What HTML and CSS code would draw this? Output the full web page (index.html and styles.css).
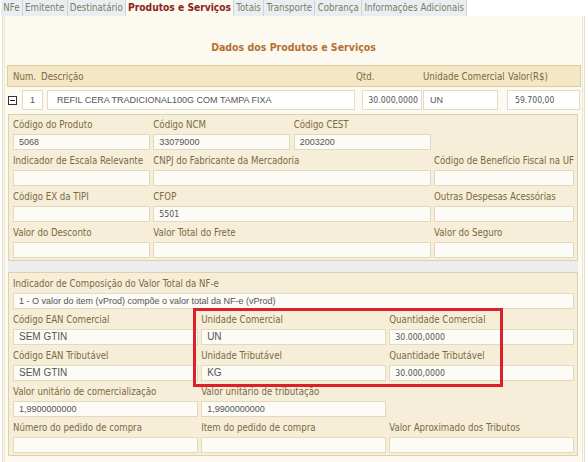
FILE: index.html
```html
<!DOCTYPE html>
<html lang="pt-BR">
<head>
<meta charset="utf-8">
<title>Dados dos Produtos e Serviços</title>
<link rel="stylesheet" href="styles.css">
</head>
<body>
<div class="tabs">
  <span class="tab">NFe</span>
  <span class="tab">Emitente</span>
  <span class="tab">Destinatário</span>
  <span class="tab active">Produtos e Serviços</span>
  <span class="tab">Totais</span>
  <span class="tab">Transporte</span>
  <span class="tab">Cobrança</span>
  <span class="tab">Informações Adicionais</span>
</div>
<div class="panel">
  <h1 class="title">Dados dos Produtos e Serviços</h1>
  <div class="items-head">
    <span>Num.</span>
    <span>Descrição</span>
    <span>Qtd.</span>
    <span>Unidade Comercial</span>
    <span>Valor(R$)</span>
  </div>
  <div class="item-row">
    <span class="toggle"><svg width="9" height="9" viewBox="0 0 9 9"><rect x="0.5" y="0.5" width="8" height="8" fill="#fff" stroke="#333"/><path d="M2 4.5h5" stroke="#222" stroke-width="1"/></svg></span>
    <span class="box num">1</span>
    <span class="box desc">REFIL CERA TRADICIONAL100G COM TAMPA FIXA</span>
    <span class="box qty">30.000,0000</span>
    <span class="box un">UN</span>
    <span class="box val">59.700,00</span>
  </div>
  <div class="details">
    <div class="card card4">
      <div class="field"><label>Código do Produto</label><div class="input">5068</div></div>
      <div class="field"><label>Código NCM</label><div class="input">33079000</div></div>
      <div class="field"><label>Código CEST</label><div class="input">2003200</div></div>
      <div class="field"></div>
      <div class="field"><label>Indicador de Escala Relevante</label><div class="input"></div></div>
      <div class="field span2"><label>CNPJ do Fabricante da Mercadoria</label><div class="input"></div></div>
      <div class="field"><label>Código de Benefício Fiscal na UF</label><div class="input"></div></div>
      <div class="field"><label>Código EX da TIPI</label><div class="input"></div></div>
      <div class="field span2"><label>CFOP</label><div class="input alt">5501</div></div>
      <div class="field"><label>Outras Despesas Acessórias</label><div class="input"></div></div>
      <div class="field"><label>Valor do Desconto</label><div class="input"></div></div>
      <div class="field span2"><label>Valor Total do Frete</label><div class="input"></div></div>
      <div class="field"><label>Valor do Seguro</label><div class="input"></div></div>
    </div>
    <div class="card card3">
      <div class="field span3"><label>Indicador de Composição do Valor Total da NF-e</label><div class="input">1 - O valor do item (vProd) compõe o valor total da NF-e (vProd)</div></div>
      <div class="field"><label>Código EAN Comercial</label><div class="input big">SEM GTIN</div></div>
      <div class="field"><label>Unidade Comercial</label><div class="input big">UN</div></div>
      <div class="field"><label>Quantidade Comercial</label><div class="input alt">30.000,0000</div></div>
      <div class="field"><label>Código EAN Tributável</label><div class="input big">SEM GTIN</div></div>
      <div class="field"><label>Unidade Tributável</label><div class="input big">KG</div></div>
      <div class="field"><label>Quantidade Tributável</label><div class="input alt">30.000,0000</div></div>
      <div class="field"><label>Valor unitário de comercialização</label><div class="input">1,9900000000</div></div>
      <div class="field"><label>Valor unitário de tributação</label><div class="input">1,9900000000</div></div>
      <div class="field"></div>
      <div class="field"><label>Número do pedido de compra</label><div class="input"></div></div>
      <div class="field"><label>Item do pedido de compra</label><div class="input"></div></div>
      <div class="field"><label>Valor Aproximado dos Tributos</label><div class="input"></div></div>
      <div class="highlight"></div>
    </div>
  </div>
</div>
</body>
</html>
```
FILE: styles.css
```css
* { box-sizing: border-box; }
html, body { margin: 0; padding: 0; background: #ffffff; }
body {
  width: 588px;
  height: 462px;
  overflow: hidden;
  font-family: "DejaVu Sans Condensed", "DejaVu Sans", sans-serif;
  font-stretch: condensed;
  font-size: 9.6px;
  color: #7a6a44;
}
.tabs {
  display: flex;
  height: 16px;
  padding-left: 1px;
  background: #ffffff;
}
.tab {
  padding: 0 2.3px;
  line-height: 16px;
  background: #e9eef0;
  border-right: 1px solid #cdd5d9;
  color: #7d7a6c;
  white-space: nowrap;
}
.tab.active {
  background: #fcf9f1;
  color: #8b2318;
  font-weight: bold;
  font-size: 10.2px;
  padding: 0 2px;
}
.panel {
  margin: 0 3px 0 2px;
  height: 446px;
  background: #fcf9f1;
  border-left: 1px solid #e6dfcb;
  border-right: 1px solid #e6dfcb;
  box-shadow: inset 1px 0 0 #fcf9f1, inset 2px 0 0 #ece6d4, inset -1px 0 0 #fcf9f1, inset -2px 0 0 #ece6d4;
  padding: 0 4px 0 4px;
}
.title {
  margin: 0;
  padding-top: 24px;
  height: 49px;
  line-height: 14px;
  text-align: center;
  font-size: 10.5px;
  font-weight: bold;
  color: #b4702f;
}
.items-head {
  display: grid;
  grid-template-columns: 28px 315px 67px 85px 1fr;
  align-items: center;
  height: 22px;
  margin-right: -1px;
  padding-left: 5px;
  background: #f3e7c6;
  border: 1px solid #dccd9f;
  color: #7a6a44;
}
.item-row {
  display: grid;
  grid-template-columns: 15px 25px 315px 61px 84px 73px;
  align-items: center;
  height: 20px;
  margin-top: 3px;
}
.toggle { display: flex; align-items: center; padding-left: 1px; }
.toggle svg { display: block; }
.box {
  display: block;
  height: 20px;
  line-height: 18px;
  border: 1px solid #e2dac4;
  background: #ffffff;
  font-family: "Liberation Sans", Arial, sans-serif;
  font-stretch: normal;
  font-size: 9px;
  color: #555555;
  white-space: nowrap;
  overflow: hidden;
}
.box.num { width: 21px; text-align: center; }
.box.desc { width: 308px; padding-left: 9px; }
.box.qty {
  width: 60px; text-align: right; padding-right: 3px;
  font-family: "DejaVu Sans Condensed", "DejaVu Sans", sans-serif; font-stretch: condensed; font-size: 8.7px;
}
.box.un { width: 75px; padding-left: 6px; }
.box.val {
  width: 73px; padding-left: 7px;
  font-family: "DejaVu Sans Condensed", "DejaVu Sans", sans-serif; font-stretch: condensed; font-size: 8.6px;
}
.details {
  margin-top: 4px;
  margin-left: 1px;
  width: 570px;
  background: #ededef;
}
.card {
  position: relative;
  display: grid;
  column-gap: 3.4px;
  row-gap: 2px;
  padding: 1px 3px 2px 4px;
  background: #f6eed8;
  border: 1px solid #dfd2aa;
}
.card4 { grid-template-columns: repeat(4, 1fr); }
.card3 { grid-template-columns: repeat(3, 1fr); margin-top: 11px; padding-top: 1.5px; }
.span2 { grid-column: span 2; }
.span3 { grid-column: span 3; }
.field label {
  display: block;
  height: 18px;
  line-height: 18px;
  white-space: nowrap;
  overflow: hidden;
  color: #7a6a44;
}
.field .input {
  height: 16px;
  line-height: 14px;
  padding-left: 5px;
  border: 1px solid #e2d9bf;
  background: #fcfbf5;
  font-family: "Liberation Sans", Arial, sans-serif;
  font-stretch: normal;
  font-size: 9px;
  color: #555555;
  white-space: nowrap;
  overflow: hidden;
}
.field .input.big { font-size: 10px; }
.field .input.alt {
  font-family: "DejaVu Sans Condensed", "DejaVu Sans", sans-serif;
  font-stretch: condensed;
  font-size: 8.7px;
}
.highlight {
  position: absolute;
  left: 184px;
  top: 35px;
  width: 310px;
  height: 79px;
  border: 3px solid #dd1f2b;
  pointer-events: none;
}
```
